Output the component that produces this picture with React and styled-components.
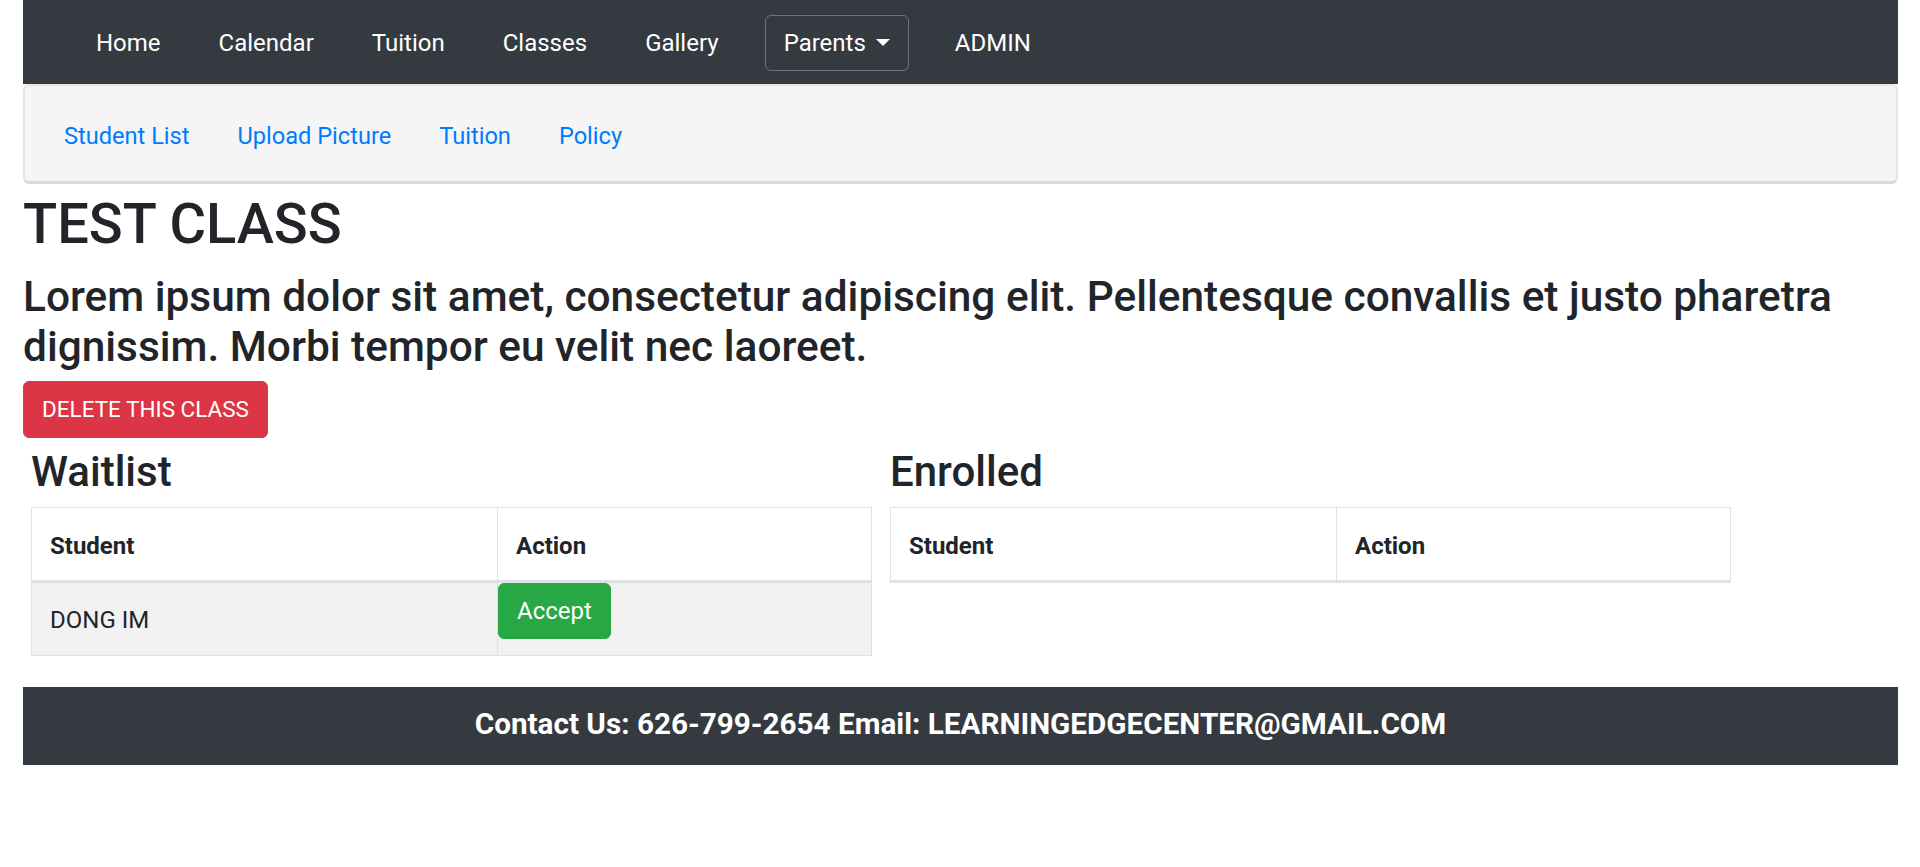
import React from "react";
import styled, { createGlobalStyle } from "styled-components";

const GlobalStyle = createGlobalStyle`
  * { box-sizing: border-box; }
  body {
    margin: 0;
    background: #fff;
    color: #212529;
    font-family: Roboto, "Open Sans", "Liberation Sans", sans-serif;
    font-size: 24px;
    line-height: 1.5;
  }
`;

const Page = styled.div`
  padding: 0 22px 0 23px;
`;

const Navbar = styled.nav`
  display: flex;
  align-items: center;
  height: 84px;
  padding: 1px 0 0 44px;
  background: #343a40;
`;

const NavLink = styled.a`
  padding: 0 29px;
  color: #fff;
  font-size: 24px;
  line-height: 36px;
  text-decoration: none;
`;

const DropdownToggle = styled.button`
  display: flex;
  align-items: center;
  height: 56px;
  margin: 0 17px 0 17px;
  padding: 0 18px;
  border: 1.5px solid #6c757d;
  border-radius: 6px;
  background: transparent;
  color: #fff;
  font-family: inherit;
  font-size: 24px;
  line-height: 36px;
  &::after {
    content: "";
    margin-left: 10px;
    border-top: 7px solid #fff;
    border-left: 7px solid transparent;
    border-right: 7px solid transparent;
  }
`;

const SubNav = styled.div`
  display: flex;
  align-items: center;
  gap: 48px;
  height: 100px;
  padding: 6px 0 0 39px;
  background: #f5f5f5;
  border: 2px solid #e6e6e6;
  border-bottom: 3px solid #d9d9d9;
  border-radius: 6px;
`;

const SubLink = styled.a`
  color: #007bff;
  font-size: 23.6px;
  text-decoration: none;
`;

const Title = styled.h1`
  margin: 0 0 8px;
  font-size: 56px;
  font-weight: 500;
  line-height: 80px;
`;

const Lead = styled.h3`
  margin: 0 0 8px;
  font-size: 42.4px;
  font-weight: 500;
  line-height: 50.4px;
`;

const Button = styled.button`
  display: inline-block;
  height: ${(p) => (p.$compact ? "56px" : "57px")};
  padding: 0 18px;
  border: 1.5px solid ${(p) => p.$color};
  border-radius: 6px;
  background: ${(p) => p.$color};
  color: #fff;
  font-family: inherit;
  font-size: ${(p) => (p.$compact ? "24px" : "22.5px")};
  line-height: 36px;
  vertical-align: top;
`;

const Columns = styled.div`
  display: flex;
  gap: 18px;
  padding: 9px 0 0 8px;
`;

const Column = styled.section`
  width: 841px;
`;

const SectionTitle = styled.h3`
  margin: 0 0 10px;
  font-size: 42px;
  font-weight: 500;
  line-height: 50.4px;
`;

const Table = styled.table`
  width: 100%;
  margin-bottom: 24px;
  border-collapse: collapse;
  border: 1.5px solid #dee2e6;
`;

const Th = styled.th`
  width: ${(p) => p.$width || "auto"};
  padding: 20px 18px 16px;
  border: 1.5px solid #dee2e6;
  border-bottom: 3px solid #dee2e6;
  text-align: left;
  font-weight: 700;
  line-height: 36px;
  vertical-align: bottom;
`;

const Row = styled.tr`
  background: ${(p) => (p.$striped ? "rgba(0,0,0,0.05)" : "transparent")};
`;

const Td = styled.td`
  padding: ${(p) => (p.$flush ? "0" : "19px 18px 17px")};
  border: 1.5px solid #dee2e6;
  line-height: 36px;
  vertical-align: top;
`;

const Footer = styled.footer`
  display: flex;
  align-items: center;
  justify-content: center;
  height: 78px;
  margin-top: 7px;
  padding-bottom: 4px;
  background: #343a40;
  color: #fff;
  font-size: 29.7px;
  font-weight: 700;
`;

export default function App() {
  const nav = ["Home", "Calendar", "Tuition", "Classes", "Gallery"];
  const sub = ["Student List", "Upload Picture", "Tuition", "Policy"];
  return (
    <>
      <GlobalStyle />
      <Page>
        <Navbar>
          {nav.map((n) => (
            <NavLink key={n} href="#">{n}</NavLink>
          ))}
          <DropdownToggle>Parents</DropdownToggle>
          <NavLink href="#">ADMIN</NavLink>
        </Navbar>
        <SubNav>
          {sub.map((s) => (
            <SubLink key={s} href="#">{s}</SubLink>
          ))}
        </SubNav>
        <Title>TEST CLASS</Title>
        <Lead>
          Lorem ipsum dolor sit amet, consectetur adipiscing elit. Pellentesque convallis et justo pharetra dignissim. Morbi tempor eu velit nec laoreet.
        </Lead>
        <Button $color="#dc3545">DELETE THIS CLASS</Button>
        <Columns>
          <Column>
            <SectionTitle>Waitlist</SectionTitle>
            <Table>
              <thead>
                <tr>
                  <Th $width="466px">Student</Th>
                  <Th>Action</Th>
                </tr>
              </thead>
              <tbody>
                <Row $striped>
                  <Td>DONG IM</Td>
                  <Td $flush>
                    <Button $color="#28a745" $compact>Accept</Button>
                  </Td>
                </Row>
              </tbody>
            </Table>
          </Column>
          <Column>
            <SectionTitle>Enrolled</SectionTitle>
            <Table>
              <thead>
                <tr>
                  <Th $width="446px">Student</Th>
                  <Th>Action</Th>
                </tr>
              </thead>
            </Table>
          </Column>
        </Columns>
        <Footer>Contact Us: 626-799-2654 Email: LEARNINGEDGECENTER@GMAIL.COM</Footer>
      </Page>
    </>
  );
}
